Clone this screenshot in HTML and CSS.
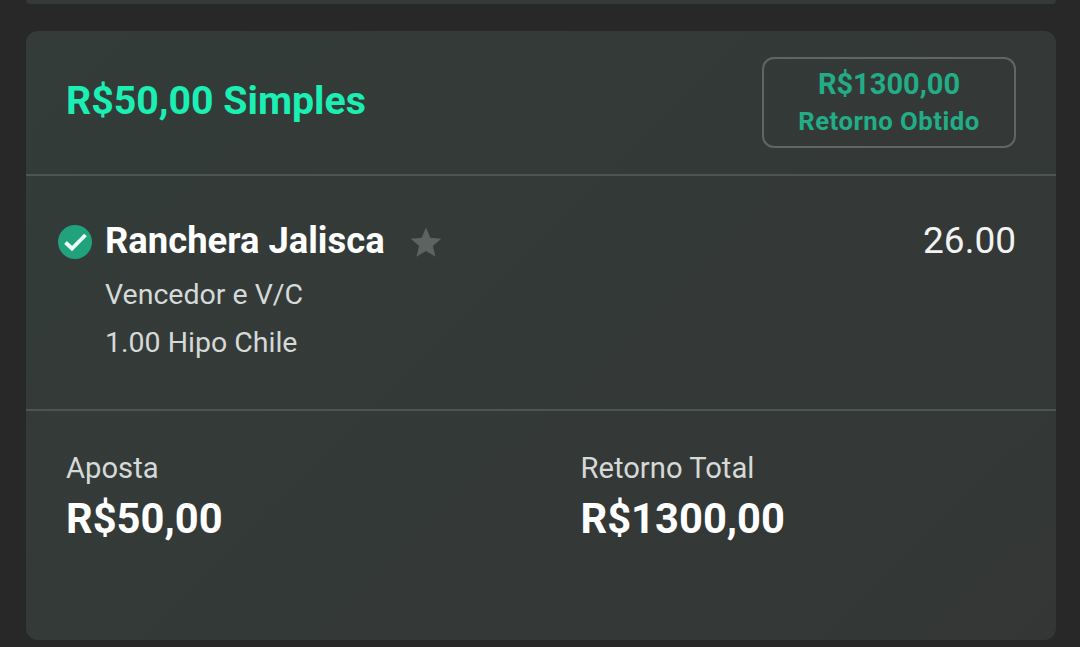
FILE: index.html
```html
<!DOCTYPE html>
<html lang="en">
<head>
    <meta charset="UTF-8">
    <meta name="viewport" content="width=device-width, initial-scale=1.0">
    <title>Aposta</title>
    <link rel="stylesheet" href="styles.css">
</head>
<body>
    <div class="prev-card"></div>

    <div class="card">
        <div class="card-head">
            <h2 class="stake-title">R$50,00 Simples</h2>
            <div class="return-box">
                <span class="return-value">R$1300,00</span>
                <span class="return-label">Retorno Obtido</span>
            </div>
        </div>

        <div class="selection">
            <svg class="check" viewBox="0 0 34 34" width="34" height="34">
                <circle cx="17" cy="17" r="17" fill="#20a27c"/>
                <path d="M7.500 17.500l6.500 6 13.500-13.500" fill="none" stroke="#eefff8" stroke-width="3.800"/>
            </svg>
            <div class="selection-info">
                <div class="name-row">
                    <span class="horse">Ranchera Jalisca</span>
                    <svg class="star" viewBox="0 0 32 32" width="32" height="32">
                        <path d="M16 1.500l4.300 10.300 11 .9-8.400 7.200 2.600 10.800L16 24.900 6.500 30.700l2.600-10.800L.7 12.700l11-.9z" fill="#5d6361"/>
                    </svg>
                    <span class="odds">26.00</span>
                </div>
                <p class="detail">Vencedor e V/C</p>
                <p class="detail">1.00 Hipo Chile</p>
            </div>
        </div>

        <div class="totals">
            <div class="total">
                <span class="total-label">Aposta</span>
                <span class="total-value">R$50,00</span>
            </div>
            <div class="total">
                <span class="total-label">Retorno Total</span>
                <span class="total-value">R$1300,00</span>
            </div>
        </div>
    </div>
</body>
</html>
```

FILE: styles.css
```css
html, body {
    height: 647px;
    overflow: hidden;
}
body {
    margin: 0;
    padding: 0 24px 0 26px;
    background-color: #282828;
    font-family: Roboto, "Liberation Sans", sans-serif;
    color: #fff;
}
.prev-card {
    height: 4px;
    margin-bottom: 27px;
    background-color: #353a39;
    border-radius: 0 0 12px 12px;
}
.card {
    height: 609px;
    background: linear-gradient(135deg, #333c39 0%, #343937 60%, #333635 100%);
    border-radius: 12px;
}
.card-head {
    height: 143px;
    display: flex;
    align-items: center;
    justify-content: space-between;
    padding: 0 40px;
    border-bottom: 2px solid #4d5553;
}
.stake-title {
    margin: 0 0 4px;
    font-size: 39.3px;
    font-weight: 700;
    color: #1cefb4;
}
.return-box {
    width: 250px;
    height: 87px;
    display: flex;
    flex-direction: column;
    align-items: center;
    justify-content: center;
    border: 2px solid #5f6664;
    border-radius: 12px;
}
.return-value {
    font-size: 29px;
    font-weight: 700;
    line-height: 36px;
    color: #22ad87;
}
.return-label {
    margin-top: 1px;
    font-size: 25.7px;
    font-weight: 700;
    line-height: 36px;
    letter-spacing: 0.5px;
    color: #22ad87;
}
.selection {
    height: 233px;
    display: flex;
    align-items: flex-start;
    padding: 0 40px 0 32px;
    border-bottom: 2px solid #4d5553;
}
.check {
    margin-top: 49px;
    margin-right: 13px;
    flex-shrink: 0;
}
.selection-info {
    flex: 1;
    padding-top: 41px;
}
.name-row {
    display: flex;
    align-items: center;
    height: 46px;
}
.horse {
    font-size: 36.4px;
    font-weight: 700;
}
.star {
    margin-left: 25px;
    margin-top: 4px;
}
.odds {
    margin-left: auto;
    font-size: 37px;
    color: #f1f3f2;
}
.detail {
    margin: 0;
    font-size: 28.5px;
    line-height: 48px;
    color: #d5d9d7;
}
.name-row + .detail {
    margin-top: 8px;
}
.totals {
    display: grid;
    grid-template-columns: 514.5px 1fr;
    padding: 37px 40px 0;
}
.total {
    display: flex;
    flex-direction: column;
}
.total-label {
    font-size: 29.2px;
    line-height: 40px;
    color: #d5d9d7;
}
.total-value {
    margin-top: 1px;
    font-size: 41.7px;
    font-weight: 700;
    line-height: 60px;
}
```
